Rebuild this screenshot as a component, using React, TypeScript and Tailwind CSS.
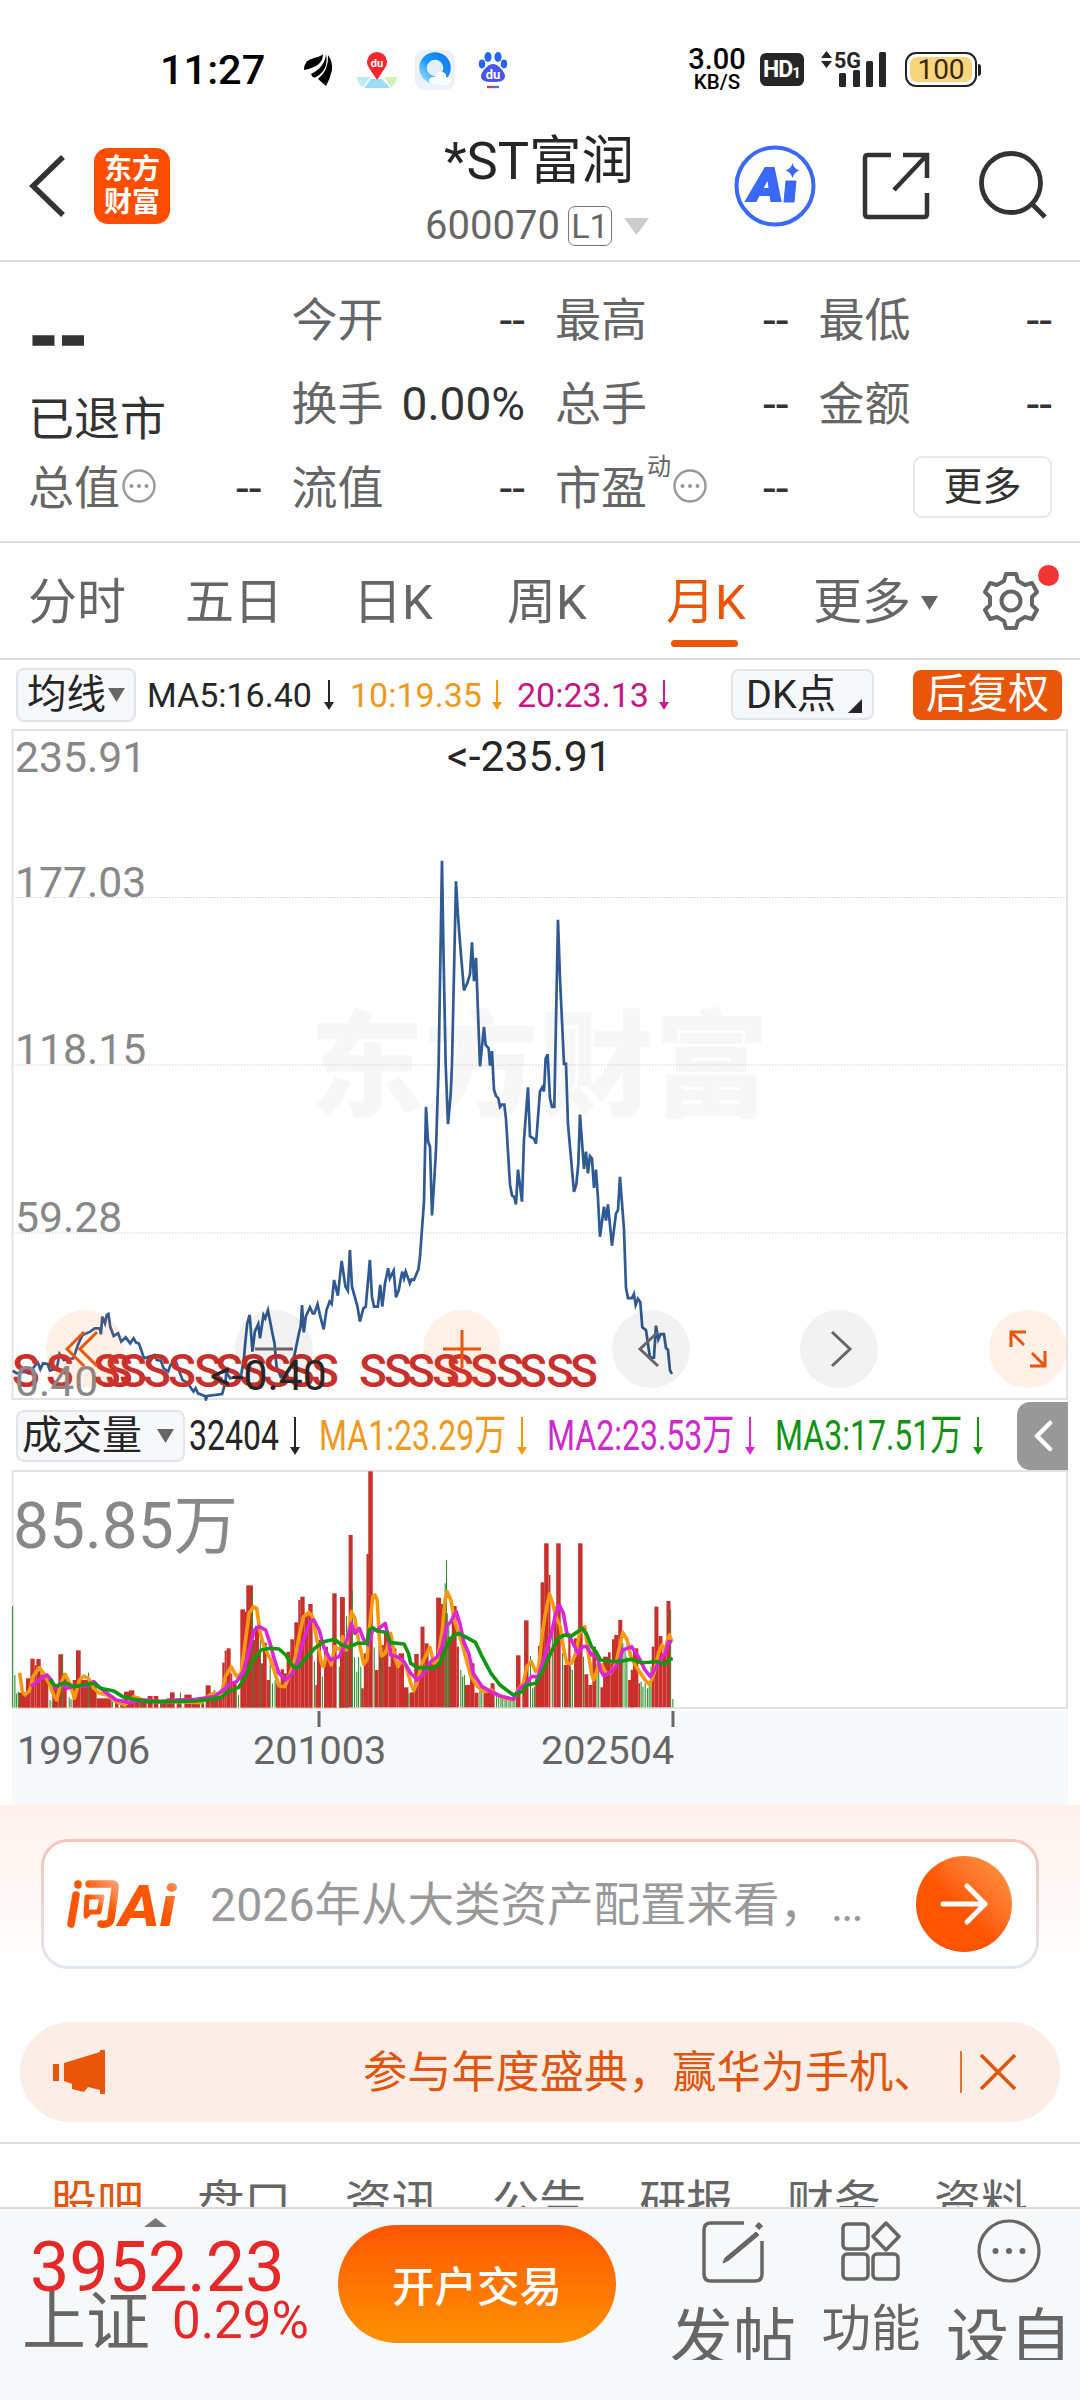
import type { ReactNode } from 'react';
import clsx from 'clsx';

type Point = [number, number];
type Bar = [number, number, number];

const STATS = [
  { label: '今开', value: '--' },
  { label: '最高', value: '--' },
  { label: '最低', value: '--' },
  { label: '换手', value: '0.00%' },
  { label: '总手', value: '--' },
  { label: '金额', value: '--' },
];

const PERIODS = [
  { label: '分时', width: 'w-[157px]' },
  { label: '五日', width: 'w-[168px]' },
  { label: '日K', width: 'w-[154px]' },
  { label: '周K', width: 'w-[159px]' },
  { label: '月K', width: 'w-[82px]' },
];

const INFO_TABS = ['股吧', '盘口', '资讯', '公告', '研报', '财务', '资料'];

const GRID_LINES = [897.5, 1065, 1233];
const PRICE_LABELS = [
  { text: '235.91', y: 772 },
  { text: '177.03', y: 897 },
  { text: '118.15', y: 1064 },
  { text: '59.28', y: 1232 },
  { text: '0.40', y: 1396 },
];

// x centres of the "S" (送转) event markers
const SPLIT_MARKS = [
  26, 60, 107, 119, 133, 157, 182, 208, 229, 253, 277, 301, 325,
  373, 398, 421, 446, 460, 484, 510, 533, 560, 584,
];

const EARLY_PRICE =
  '37,512 48,520 70,515 85,520 103,495 110,488 117,508 125,490 138,492 145,512 165,505 173,462 185,480 213,475 228,430 240,405 262,395 275,385 290,385 293,403 297,350 305,370 310,345 315,342 320,380 330,408 343,400 352,425 365,412 378,430 388,415 395,428 403,430 410,450 418,475 450,465 455,480 467,482 475,505 488,515 495,495 512,488 520,512 530,540 545,550 555,565 562,575 568,565 575,580 595,588 598,598 602,588 645,582 655,545 657,515 668,535 690,530 700,525 708,480 712,430 718,370 725,345 733,455 740,395 750,372 755,415 765,345 770,355 778,330 790,395 797,430 803,500 815,530 830,520 850,490 860,440 868,400 873,380 877,315 882,397 888,350 900,322 908,340 913,340 922,313 930,350 940,388 948,330 957,305 963,312 970,240 981,287 992,183 1003,260 1010,272 1016,150 1022,260 1038,320 1045,365 1055,325 1062,320 1074,180 1080,290 1086,320 1097,320 1104,255 1110,320 1118,250 1127,205 1132,235 1143,212 1150,292 1158,270 1164,235 1168,215 1173,235 1178,215 1190,250 1195,238 1202,240 1214,210';
const LATE_PRICE =
  '175,1250 180,1210 192,1050 198,775 204,875 210,890 216,1090 222,1000 228,900 236,650 246,60 250,300 257,650 264,825 272,740 276,650 288,120 294,220 301,310 312,437 322,415 330,390 336,297 342,410 348,342 360,657 372,543 377,595 386,605 390,655 396,613 402,725 408,743 415,750 420,775 426,768 433,768 438,810 450,1000 456,1032 463,1037 468,1058 474,957 486,1050 492,870 504,718 510,860 522,868 528,882 540,730 547,718 552,730 557,635 563,622 570,750 576,775 583,775 594,232 600,400 612,650 618,650 624,825 642,1022 649,1000 655,940 660,797 672,955 678,905 684,968 690,918 696,925 702,1010 708,957 714,1040 720,1152 732,1065 738,1105 744,1058 756,1178 768,1085 774,1075 780,978 792,1130 798,1300 804,1330 816,1330 822,1318 827,1350 834,1332 841,1342 847,1415 858,1423 870,1503 882,1503 888,1410 895,1450 902,1435 912,1435 918,1475 924,1480 930,1540 936,1550';

// [from, to, top], bars stand on y = 503
const EARLY_BARS: Bar[] = [
  [55, 78, 458], [78, 91, 415], [91, 104, 356], [104, 109, 375], [109, 122, 357], [122, 145, 403],
  [157, 175, 440], [175, 188, 343], [188, 200, 400], [218, 228, 420], [228, 242, 331], [242, 266, 420],
  [266, 290, 430], [290, 335, 475], [345, 356, 488], [362, 372, 485], [372, 387, 455], [387, 403, 451],
  [403, 418, 470], [418, 440, 478], [443, 458, 468], [461, 475, 468], [480, 500, 482], [500, 512, 475],
  [510, 524, 457], [530, 545, 475], [553, 575, 464], [575, 600, 476], [604, 612, 488], [617, 632, 436],
  [632, 655, 465], [655, 667, 455], [667, 674, 368], [674, 680, 332], [680, 692, 325], [692, 697, 400],
  [697, 710, 430], [721, 735, 208], [735, 740, 215], [739, 759, 136], [759, 765, 300], [765, 777, 258],
  [777, 783, 330], [783, 789, 370], [789, 800, 308], [800, 810, 420], [828, 842, 430], [842, 852, 388],
  [852, 860, 400], [860, 871, 335], [871, 883, 298], [883, 895, 247], [895, 901, 180], [901, 914, 170],
  [914, 925, 220], [925, 938, 192], [946, 951, 435], [951, 963, 300], [972, 984, 320], [984, 997, 360],
  [997, 1010, 160], [1018, 1022, 405], [1020, 1034, 172], [1036, 1046, 320],
];

// [from, to, top], bars stand on y = 922
const LATE_BARS: Bar[] = [
  [763, 772, 592], [772, 781, 730], [781, 790, 405], [809, 815, 865], [815, 822, 760], [821, 826, 462],
  [825, 835, 214], [840, 848, 810], [848, 860, 735], [860, 870, 700], [870, 879, 800], [875, 888, 745],
  [888, 893, 800], [893, 905, 760], [905, 915, 862], [918, 928, 877], [928, 938, 762], [938, 943, 800],
  [942, 951, 680], [951, 960, 730], [960, 977, 790], [977, 988, 593], [988, 996, 612], [996, 1003, 640],
  [1003, 1014, 710], [1012, 1023, 618], [1023, 1028, 740], [1041, 1053, 855], [1053, 1063, 790],
  [1063, 1072, 878], [1083, 1100, 875], [1099, 1108, 850], [1156, 1166, 766], [1170, 1175, 850],
  [1174, 1184, 661], [1199, 1207, 835], [1205, 1212, 738], [1211, 1219, 547], [1219, 1229, 430],
  [1229, 1233, 525], [1240, 1246, 620], [1246, 1256, 430], [1263, 1273, 795], [1273, 1278, 700],
  [1286, 1296, 715], [1295, 1305, 430], [1309, 1318, 823], [1318, 1327, 855], [1327, 1335, 740],
  [1345, 1352, 862], [1351, 1362, 770], [1362, 1368, 757], [1368, 1374, 790], [1371, 1378, 718],
  [1376, 1385, 705], [1385, 1394, 660], [1407, 1418, 840], [1413, 1419, 810], [1418, 1430, 745],
  [1430, 1434, 850], [1460, 1466, 740], [1466, 1475, 620], [1475, 1484, 708], [1484, 1493, 760],
  [1493, 1502, 603],
];

const DOWN_BARS: Point[] = [
  [28, 618], [33, 825], [37, 880], [41, 875], [112, 900], [117, 905], [140, 762], [155, 893], [159, 898],
  [198, 818], [252, 905], [270, 908], [318, 912], [360, 908], [404, 877], [455, 905], [480, 870],
  [528, 870], [534, 885], [565, 575], [583, 700], [605, 770], [610, 850], [616, 840], [704, 785],
  [722, 830], [760, 800], [776, 648], [789, 570], [794, 772], [799, 815], [803, 772], [808, 800],
  [838, 742], [855, 735], [916, 880], [997, 550], [1000, 480], [1005, 680], [1032, 810], [1036, 830],
  [1040, 825], [1075, 870], [1079, 868], [1112, 880], [1117, 885], [1122, 888], [1126, 892], [1131, 897],
  [1135, 900], [1140, 900], [1144, 903], [1149, 900], [1153, 880], [1188, 768], [1193, 865], [1197, 860],
  [1237, 700], [1260, 760], [1278, 800], [1282, 810], [1307, 770], [1337, 790], [1341, 800], [1395, 730],
  [1400, 750], [1404, 770], [1436, 845], [1440, 860], [1445, 850], [1450, 865], [1454, 860], [1458, 800],
  [1502, 630], [1507, 897],
];

const MA_LINES = [
  {
    color: '#f7990f',
    points:
      '44,818 50,875 56,885 66,872 74,830 88,803 98,820 110,850 120,885 127,900 136,850 146,823 156,850 167,895 178,840 188,828 198,835 210,865 222,880 240,885 260,905 280,915 300,890 320,900 350,905 400,905 450,908 470,885 480,880 495,885 505,830 518,800 530,830 540,820 550,720 558,640 568,620 575,625 583,700 593,745 605,775 615,815 625,858 638,860 650,820 660,780 670,710 680,650 692,637 700,650 710,720 720,790 725,800 732,760 742,795 750,740 762,750 767,710 776,750 787,635 795,655 800,700 808,750 815,793 822,780 828,680 835,590 840,585 845,600 850,720 855,768 863,760 868,740 875,700 885,775 892,800 900,780 910,800 920,850 927,872 935,845 945,790 955,765 963,742 972,790 980,780 990,700 997,600 1002,575 1010,600 1018,660 1025,690 1035,730 1045,780 1055,830 1070,860 1085,875 1100,870 1115,885 1130,895 1150,900 1160,870 1172,850 1180,800 1190,785 1200,815 1207,800 1215,700 1222,640 1231,582 1238,610 1246,650 1255,680 1263,750 1270,790 1280,790 1290,760 1298,700 1310,680 1318,760 1325,820 1330,840 1340,800 1348,795 1358,820 1368,820 1380,790 1388,740 1395,697 1405,720 1413,770 1425,800 1435,820 1445,840 1455,855 1465,820 1475,760 1483,735 1490,755 1495,720 1500,705 1505,725',
  },
  {
    color: '#d926d9',
    points:
      '68,858 78,852 90,838 105,825 115,840 125,865 135,850 150,865 170,858 190,860 210,845 225,865 245,885 260,900 280,905 290,908 320,900 360,905 400,900 440,898 480,890 500,870 515,852 530,845 545,815 560,740 570,690 580,680 595,690 605,730 615,780 625,820 640,840 655,820 668,780 680,720 695,665 703,660 715,690 725,740 740,780 750,775 760,770 770,740 780,710 787,670 795,700 805,685 815,720 825,735 835,690 845,690 863,670 870,710 875,765 890,770 905,785 920,820 935,840 950,820 965,785 980,770 990,740 1000,680 1010,665 1022,635 1030,670 1040,730 1050,760 1060,820 1080,860 1100,875 1120,888 1150,898 1165,865 1180,850 1190,830 1205,830 1220,770 1235,700 1245,640 1253,615 1262,640 1270,700 1280,720 1295,760 1305,740 1315,740 1325,765 1338,770 1345,810 1353,828 1370,815 1385,790 1395,750 1415,740 1430,770 1445,810 1457,830 1475,790 1490,760 1498,725 1506,725',
  },
  {
    color: '#0f980f',
    points:
      '112,838 120,855 128,858 145,848 165,860 185,855 210,850 225,865 255,873 275,890 300,898 330,905 380,905 440,903 495,893 510,875 535,862 550,830 565,785 585,750 605,745 625,747 640,765 658,803 670,800 685,775 705,745 725,725 750,718 765,735 780,742 800,730 822,730 827,690 835,683 845,693 865,697 875,728 905,732 915,760 920,790 935,803 975,803 985,790 1000,740 1015,708 1027,700 1045,712 1065,727 1080,770 1100,820 1120,855 1150,885 1170,875 1180,855 1200,850 1215,815 1230,770 1250,715 1265,705 1280,708 1305,685 1315,705 1325,740 1335,755 1345,780 1365,783 1385,785 1415,778 1435,788 1455,787 1470,785 1490,793 1500,778 1507,776',
  },
];

function DownArrow({ color }: { color: string }) {
  return (
    <svg width="10" height="38" viewBox="0 0 10 38" className="shrink-0">
      <path d="M5 0V32" stroke={color} strokeWidth="2" />
      <path d="M0 30H10L5 38Z" fill={color} />
    </svg>
  );
}

function Triangle({ className }: { className?: string }) {
  return (
    <svg viewBox="0 0 16 14" preserveAspectRatio="none" className={clsx('shrink-0', className)}>
      <path d="M0 0H16L8 14Z" />
    </svg>
  );
}

function MoreDots() {
  return (
    <svg width="36" height="36" viewBox="0 0 36 36" className="-mt-[5px] ml-[1px] shrink-0">
      <circle cx="18" cy="18" r="15.5" fill="none" stroke="#999" strokeWidth="2.4" />
      <circle cx="10.5" cy="18" r="2" fill="#999" />
      <circle cx="18" cy="18" r="2" fill="#999" />
      <circle cx="25.5" cy="18" r="2" fill="#999" />
    </svg>
  );
}

function StatusBar() {
  return (
    <div className="flex h-[137px] items-center pt-[2px] text-black">
      <div className="ml-[160px] w-[143px] text-[41.5px] font-medium leading-none">11:27</div>
      <div className="flex items-center">
        <svg width="32" height="36" viewBox="0 0 32 36">
          <path d="M2 16Q2 8 11 6Q16 5 19 3Q17 11 2 16Z" />
          <path d="M1 18Q1 8 10 7Q17 6 20 2Q20 10 13 14Q7 17 1 18Z" />
          <path d="M8 22Q22 15 23 2Q26 18 13 25Q10 27 8 22Z" />
          <path d="M15 27Q26 18 25 3Q30 10 29 18Q27 27 23 34Z" />
        </svg>
        <svg width="42" height="38" viewBox="0 0 42 38" className="ml-[21px]">
          <path d="M1 26H14L7 36Q1 33 1 26Z" fill="#bfeafa" />
          <path d="M15 28H26L34 37H8Z" fill="#9bdcf7" />
          <path d="M28 26H41Q40 34 35 36Z" fill="#d3f2bb" />
          <path d="M21 29L13 17A10 10 0 1 1 29 17Z" fill="#f22a30" />
          <text x="21" y="16" fontSize="11" fontWeight="700" fill="#fff" textAnchor="middle">du</text>
        </svg>
        <svg width="42" height="42" viewBox="0 0 42 42" className="ml-[16px]">
          <defs>
            <linearGradient id="browser" x1="0" y1="1" x2="1" y2="0">
              <stop offset="0" stopColor="#8fd8fb" />
              <stop offset=".45" stopColor="#1b9cf9" />
              <stop offset="1" stopColor="#1478f3" />
            </linearGradient>
          </defs>
          <rect x="1" y="1" width="40" height="40" rx="9" fill="#edf1f8" />
          <circle cx="21" cy="19" r="12" fill="#e4eefa" stroke="url(#browser)" strokeWidth="7.5" />
          <path d="M22 36Q14 35 15 31Q17 27 21 28Q23 21 29 23Q33 25 32 28Q38 29 37 33Q35 36 32 36Z" fill="#f8fbff" />
        </svg>
        <svg width="30" height="40" viewBox="0 0 30 40" className="ml-[22px]">
          <ellipse cx="10" cy="7" rx="3.6" ry="5" fill="#2468f2" />
          <ellipse cx="20" cy="7" rx="3.6" ry="5" fill="#2468f2" />
          <ellipse cx="4" cy="14" rx="3.2" ry="4.4" fill="#2468f2" />
          <ellipse cx="26" cy="14" rx="3.2" ry="4.4" fill="#2468f2" />
          <path d="M15 14C20 14 27 22 27 26C27 31 22 32 15 32S3 31 3 26C3 22 10 14 15 14Z" fill="#4a55ee" />
          <text x="15" y="29" fontSize="13" fontWeight="700" fill="#fff" textAnchor="middle">du</text>
          <path d="M9 37H15" stroke="#c44" strokeWidth="2.4" />
          <path d="M15 37H21" stroke="#47c" strokeWidth="2.4" />
        </svg>
      </div>
      <div className="ml-[178px] flex w-[62px] flex-col items-center">
        <span className="text-[29px] font-medium leading-[25px]">3.00</span>
        <span className="text-[20.5px] font-medium leading-[20px]">KB/S</span>
      </div>
      <div className="ml-[12px] flex h-[33px] w-[44px] items-center justify-center rounded-[6px] bg-[#262626] text-white">
        <span className="text-[23px] font-bold leading-none tracking-[-1px]">HD</span>
        <span className="mt-[7px] text-[15px] font-bold leading-none">1</span>
      </div>
      <svg width="70" height="40" viewBox="0 0 70 40" className="-mt-[1px] ml-[15px]" fill="#262626">
        <path d="M2 9L7.500 2L13 9ZM2 12L7.500 19L13 12Z" />
        <text x="15" y="19" fontSize="22" fontWeight="700" textLength="27" lengthAdjust="spacingAndGlyphs">5G</text>
        <rect x="20" y="24" width="7" height="14" rx="1.500" />
        <rect x="34" y="21" width="7" height="17" rx="1.500" />
        <rect x="47" y="12" width="7" height="26" rx="1.500" />
        <rect x="60" y="3" width="7" height="35" rx="1.500" />
      </svg>
      <div className="ml-[16px] flex h-[35px] w-[72px] items-center justify-center rounded-[11px] border-[2.5px] border-[#222] p-[3px]">
        <div className="flex h-full w-full items-center justify-center rounded-[7px] bg-[#fbd57c] text-[28px] leading-none text-[#332a10]">
          100
        </div>
      </div>
      <div className="ml-[1px] h-[12px] w-[3px] rounded-r-full bg-[#222]" />
    </div>
  );
}

function Header() {
  return (
    <div className="flex h-[125px] items-start border-b-2 border-[#dcdcdc]">
      <svg width="38" height="64" viewBox="0 0 38 64" className="ml-[29px] mt-[17px]">
        <path d="M34 3L4 32L34 61" fill="none" stroke="#333" strokeWidth="5.500" />
      </svg>
      <div className="ml-[27px] mt-[11px] flex h-[76px] w-[76px] flex-col items-center justify-center rounded-[14px] bg-[#ff4d00] text-[28px] font-bold leading-[33px] text-white">
        <span>东方</span>
        <span>财富</span>
      </div>
      <div className="-mt-[11px] ml-[237px] w-[265px]">
        <div className="ml-[37px] text-[52.5px] leading-[70px] text-[#262626]">*ST富润</div>
        <div className="ml-[18px] flex h-[60px] items-center text-[40px] leading-none text-[#666]">
          600070
          <span className="ml-[8px] flex h-[40px] w-[44px] items-center justify-center rounded-[7px] border-[1.5px] border-[#777] text-[34px]">
            L1
          </span>
          <Triangle className="ml-[12px] h-[17px] w-[25px] fill-[#ccc]" />
        </div>
      </div>
      <svg width="82" height="82" viewBox="0 0 82 82" className="ml-[62px] mt-[8px]">
        <circle cx="41" cy="41" r="38.500" fill="none" stroke="#3a68f9" strokeWidth="4" />
        <text x="15" y="56" fontSize="46" fontWeight="900" fontStyle="italic" fill="#3a68f9" stroke="#3a68f9" strokeWidth="2" textLength="34" lengthAdjust="spacingAndGlyphs">A</text>
        <path d="M52 36H62L60 57H50Z" fill="#3a68f9" stroke="#3a68f9" strokeLinejoin="round" />
        <path d="M58.500 18Q60 24 65.500 25.500Q60 27 58.500 33Q57 27 51.500 25.500Q57 24 58.500 18Z" fill="#3a68f9" />
      </svg>
      <svg width="68" height="68" viewBox="0 0 68 68" className="ml-[46px] mt-[15px]" fill="none" stroke="#333" strokeWidth="4.500">
        <path d="M29 3H6Q3 3 3 6V62Q3 65 6 65H62Q65 65 65 62V41" />
        <path d="M41 3H65V26M64 4L32 38" />
      </svg>
      <svg width="72" height="72" viewBox="0 0 72 72" className="ml-[48px] mt-[13px]" fill="none" stroke="#333" strokeWidth="4.800">
        <circle cx="33" cy="33" r="29.500" />
        <path d="M54 54L67 67" />
      </svg>
    </div>
  );
}

function Stat({ label, value, children }: { label: string; value: string; children?: ReactNode }) {
  return (
    <div className="flex h-[84px] items-center justify-between">
      <span className="flex items-center text-[#666]">
        {label}
        {children}
      </span>
      <span className="text-[#333]">{value}</span>
    </div>
  );
}

function Quote() {
  return (
    <div className="h-[281px] border-b-2 border-[#dcdcdc] pl-[28px] pr-[28px] pt-[16px] text-[46px] leading-none">
      <div className="grid grid-cols-4 gap-x-[30px]">
        <div className="row-span-2 flex flex-col text-[#333]">
          <span className="mt-[30px] text-[70px] font-black leading-[60px] tracking-[-2px] [-webkit-text-stroke:1.5px_#333]">
            --
          </span>
          <span className="mt-[28px]">已退市</span>
        </div>
        {STATS.map((stat) => (
          <Stat key={stat.label} {...stat} />
        ))}
        <Stat label="总值" value="--">
          <MoreDots />
        </Stat>
        <Stat label="流值" value="--" />
        <Stat label="市盈" value="--">
          <sup className="-mt-[18px] text-[24px] leading-none">动</sup>
          <MoreDots />
        </Stat>
        <div className="flex items-center justify-end">
          <div className="-mt-[2px] flex h-[62px] w-[139px] items-center justify-center rounded-[9px] border-2 border-[#e8e8e8] text-[39px] text-[#333]">
            更多
          </div>
        </div>
      </div>
    </div>
  );
}

function PeriodTabs() {
  return (
    <div className="flex h-[117px] items-center border-b-2 border-[#dcdcdc] pl-[28px] pt-[4px] text-[49px] leading-none text-[#666]">
      <div className="flex w-[721px]">
        {PERIODS.map(({ label, width }) => (
          <div
            key={label}
            className={clsx('relative whitespace-nowrap', width, label === '月K' && 'text-[#e9560a]')}
          >
            {label}
            {label === '月K' && (
              <span className="absolute -bottom-[20px] left-[5px] h-[7px] w-[67px] rounded-full bg-[#e9560a]" />
            )}
          </div>
        ))}
      </div>
      <span className="ml-[64px]">更多</span>
      <Triangle className="ml-[10px] h-[14px] w-[17px] fill-[#666]" />
      <div className="relative -mt-[4px] ml-[43px]">
        <svg width="60" height="60" viewBox="0 0 60 60" fill="none" stroke="#666" strokeWidth="4" strokeLinejoin="round">
          <path d="M25 3H35L37 10L44 14L51 12L56 21L51 26V34L56 39L51 48L44 46L37 50L35 57H25L23 50L16 46L9 48L4 39L9 34V26L4 21L9 12L16 14L23 10Z" />
          <circle cx="30" cy="30" r="9.500" />
        </svg>
        <span className="absolute -right-[18px] -top-[6px] h-[21px] w-[21px] rounded-full bg-[#f43531]" />
      </div>
    </div>
  );
}

function IndicatorRow() {
  return (
    <div className="flex h-[69px] items-center pl-[16px] leading-none text-[#262626]">
      <div className="flex h-[54px] w-[120px] items-center rounded-[8px] border-2 border-[#e3e5e8] bg-[#f7f8fa] pl-[9px] text-[39.5px]">
        均线
        <Triangle className="ml-[2px] h-[14px] w-[17px] fill-[#666]" />
      </div>
      <div className="flex items-center pl-[11px] text-[34px]">
        <span className="w-[177px]">MA5:16.40</span>
        <DownArrowSmall color="#262626" />
        <span className="ml-[16px] w-[142px] text-[#f0991b]">10:19.35</span>
        <DownArrowSmall color="#f7990f" />
        <span className="ml-[15px] w-[142px] text-[#c71585]">20:23.13</span>
        <DownArrowSmall color="#d01890" />
      </div>
      <div className="ml-[62px] flex h-[51px] w-[143px] items-center rounded-[8px] border-2 border-[#e3e5e8] bg-[#f7f8fa] pl-[13px] text-[39.5px]">
        <span className="whitespace-nowrap">DK点</span>
        <svg width="14" height="14" viewBox="0 0 14 14" className="ml-[12px] mt-[22px] shrink-0">
          <path d="M14 0V14H0Z" fill="#262626" />
        </svg>
      </div>
      <div className="ml-[39px] flex h-[50px] w-[149px] items-center justify-center rounded-[8px] bg-[#e9560a] text-[41px] text-white">
        后复权
      </div>
    </div>
  );
}

function DownArrowSmall({ color }: { color: string }) {
  return (
    <svg width="10" height="30" viewBox="0 0 10 30" className="shrink-0">
      <path d="M5 0V25" stroke={color} strokeWidth="2" />
      <path d="M0 22H10L5 30Z" fill={color} />
    </svg>
  );
}

function ChartButton({ accent, children }: { accent?: boolean; children: ReactNode }) {
  return (
    <div
      className={clsx(
        'flex h-[78px] w-[78px] items-center justify-center rounded-full',
        accent ? 'bg-[#ff5a00]/9' : 'bg-black/5',
      )}
    >
      <svg
        width="40"
        height="40"
        viewBox="0 0 40 40"
        fill="none"
        strokeWidth="3"
        stroke={accent ? '#e9560a' : '#666'}
      >
        {children}
      </svg>
    </div>
  );
}

function PriceChart() {
  return (
    <div className="relative h-[672px]">
      <svg width="1080" height="672" viewBox="0 729 1080 672" className="block">
        <text x="539" y="1107" fontSize="115" fontWeight="900" fill="#f7f7f7" textAnchor="middle">东方财富</text>
        <rect x="12.500" y="730" width="1054.500" height="669" fill="none" stroke="#e3e3e3" strokeWidth="2" />
        {GRID_LINES.map((y) => (
          <path key={y} d={`M13 ${y}H1067`} stroke="#d0d0d0" strokeDasharray="1.500 1.500" />
        ))}
        <g fill="none" stroke="#2f5a93" strokeWidth="2.700">
          <polyline points={EARLY_PRICE} transform="translate(0 1200) scale(.3444 .3333)" vectorEffect="non-scaling-stroke" />
          <polyline points={LATE_PRICE} transform="translate(360 840) scale(.3333 .3444)" vectorEffect="non-scaling-stroke" />
        </g>
        <g fontSize="46" fontWeight="500" fill="#c9302c" textAnchor="middle">
          {SPLIT_MARKS.map((x) => (
            <text key={x} x={x} y="1387">S</text>
          ))}
        </g>
        <g fontSize="42.700" fill="#888">
          {PRICE_LABELS.map(({ text, y }) => (
            <text key={text} x="15" y={y}>{text}</text>
          ))}
        </g>
        <g fontSize="42.700" fill="#262626">
          <text x="447" y="771">&lt;-235.91</text>
          <text x="210" y="1390">&lt;-0.40</text>
        </g>
      </svg>
      <div className="absolute left-[46px] right-[13px] top-[581px] flex justify-between">
        <ChartButton accent>
          <path d="M19 3L2 20L19 37M32 3L15 20L32 37" />
        </ChartButton>
        <ChartButton>
          <path d="M1 20H39" />
        </ChartButton>
        <ChartButton accent>
          <path d="M1 20H39M20 1V39" />
        </ChartButton>
        <ChartButton>
          <path d="M27 3L9 20L27 37" />
        </ChartButton>
        <ChartButton>
          <path d="M13 3L31 20L13 37" />
        </ChartButton>
        <ChartButton accent>
          <path d="M3 18V3H18M3 3L16 16M37 22V37H22M37 37L24 24" />
        </ChartButton>
      </div>
    </div>
  );
}

function VolumeLegend({ text, className, color }: { text: string; className: string; color: string }) {
  return (
    <div className={clsx('flex items-center', className)}>
      <span className="w-[198px] origin-left scale-x-[.745] whitespace-nowrap text-[43px]">{text}</span>
      <DownArrow color={color} />
    </div>
  );
}

function VolumeRow() {
  return (
    <div className="flex h-[69px] items-center pl-[16px] leading-none text-[#262626]">
      <div className="flex h-[52px] w-[169px] items-center rounded-[8px] border-2 border-[#e3e5e8] bg-[#f7f8fa] pl-[4px] text-[40px]">
        成交量
        <Triangle className="ml-[15px] h-[14px] w-[17px] fill-[#666]" />
      </div>
      <div className="ml-[4px] flex items-center">
        <span className="w-[101px] origin-left scale-x-[.745] text-[43px]">32404</span>
        <DownArrow color="#262626" />
      </div>
      <VolumeLegend text="MA1:23.29万" color="#f7990f" className="ml-[19px] w-[228px] text-[#f0991b]" />
      <VolumeLegend text="MA2:23.53万" color="#d926d9" className="w-[228px] text-[#cf28cf]" />
      <VolumeLegend text="MA3:17.51万" color="#0f980f" className="w-[228px] text-[#109310]" />
      <div className="ml-auto mr-[12px] flex h-[68px] w-[51px] items-center justify-center rounded-l-[13px] bg-[#999]">
        <svg width="20" height="32" viewBox="0 0 20 32" className="fill-none stroke-white">
          <path d="M17 3L4 16L17 29" strokeWidth="4.500" strokeLinecap="round" strokeLinejoin="round" />
        </svg>
      </div>
    </div>
  );
}

function VolumeChart() {
  return (
    <svg width="1080" height="335" viewBox="0 1470 1080 335" className="block">
      <rect x="12.500" y="1471" width="1054.500" height="237" fill="none" stroke="#e3e3e3" strokeWidth="2" />
      <rect x="12" y="1711" width="1056" height="94" fill="#f7f8fa" />
      <text x="13" y="1547.500" fontSize="64" fill="#888">85.85万</text>
      <g transform="translate(0 1540) scale(.3333)" fill="#c9302c">
        {EARLY_BARS.map(([from, to, top]) => (
          <rect key={from} x={from} y={top} width={to - from} height={503 - top} />
        ))}
      </g>
      <g transform="translate(0 1400) scale(.4464 .3333)">
        {LATE_BARS.map(([from, to, top]) => (
          <rect key={from} x={from} y={top} width={to - from} height={922 - top} fill="#c9302c" />
        ))}
        {DOWN_BARS.map(([x, top]) => (
          <rect key={x} x={x - 1} y={top} width="2.500" height={922 - top} fill="#2f922f" />
        ))}
        {MA_LINES.map(({ color, points }) => (
          <polyline
            key={color}
            points={points}
            fill="none"
            stroke={color}
            strokeWidth="3.600"
            strokeLinejoin="round"
            vectorEffect="non-scaling-stroke"
          />
        ))}
      </g>
      <path d="M319 1711V1727M673 1711V1727" stroke="#666" strokeWidth="3" />
      <g fontSize="39.500" fill="#666">
        <text x="17" y="1764">199706</text>
        <text x="253" y="1764">201003</text>
        <text x="541" y="1764">202504</text>
      </g>
    </svg>
  );
}

function AskAi() {
  return (
    <div className="h-[217px] bg-linear-to-b from-[#fff1ec] to-white to-80% px-[41px] pt-[34px]">
      <div className="rounded-[27px] bg-linear-to-b from-[#f5c5bc] to-[#dfe7f2] p-[3px]">
        <div className="flex h-[124px] items-center rounded-[24px] bg-white pl-[22px] leading-none">
          <svg width="112" height="52" viewBox="0 0 112 52">
            <defs>
              <linearGradient id="ask" x1="0" y1="1" x2="1" y2="0">
                <stop offset=".6" stopColor="#ff5500" />
                <stop offset="1" stopColor="#ff9a6b" />
              </linearGradient>
            </defs>
            <g fill="none" stroke="url(#ask)" strokeWidth="7.500" strokeLinejoin="round" strokeLinecap="round">
              <path d="M10 17L5 46M12 6V7M23 6H46Q50 6 49 11L45 41Q44 47 35 46" />
              <path d="M21 19H36L33 34H24L20 38Z" strokeWidth="5" />
            </g>
            <text x="53" y="48" fontSize="57" fontWeight="800" fontStyle="italic" fill="url(#ask)" textLength="57" lengthAdjust="spacingAndGlyphs">Ai</text>
          </svg>
          <span className="ml-[32px] w-[655px] whitespace-nowrap pt-[2px] text-[46.5px] text-[#999]">
            2026年从大类资产配置来看，<span className="ml-[5px] tracking-[-2px]">...</span>
          </span>
          <div className="ml-[51px] flex h-[96px] w-[96px] items-center justify-center rounded-full bg-linear-to-tr from-[#ff5500] from-45% to-[#ff9a45]">
            <svg width="50" height="44" viewBox="0 0 50 44" fill="none" stroke="#fff" strokeWidth="5" strokeLinecap="round" strokeLinejoin="round">
              <path d="M4 22H46M28 4L46 22L28 40" />
            </svg>
          </div>
        </div>
      </div>
    </div>
  );
}

function Banner() {
  return (
    <div className="mx-[20px] flex h-[100px] items-center rounded-[50px] bg-[#fceee6] pl-[33px] leading-none">
      <svg width="53" height="46" viewBox="0 0 53 46" fill="#e9560a">
        <rect x="0" y="15" width="6" height="17" />
        <path d="M11 14L47 3V1H52V45H47V41L35 38L31 43L19 40V35L11 32Z" />
      </svg>
      <span className="ml-[257px] w-[560px] whitespace-nowrap pt-[3px] text-[44.2px] text-[#e0560f]">
        参与年度盛典，赢华为手机、
      </span>
      <div className="ml-[37px] h-[42px] w-[1.5px] bg-[#e0762f]" />
      <svg width="38" height="38" viewBox="0 0 38 38" className="ml-[17px]">
        <path d="M2 2L36 36M36 2L2 36" stroke="#e0560f" strokeWidth="3.500" />
      </svg>
    </div>
  );
}

function BottomBar() {
  return (
    <div className="flex h-[193px] items-start border-t-2 border-[#dcdcdc] bg-[#f7f8fa] leading-none text-[#666]">
      <div className="w-[338px] pl-[22px] pt-[9px]">
        <Triangle className="ml-[122px] h-[9px] w-[23px] rotate-180 fill-[#777]" />
        <div className="ml-[8px] mt-[8px] h-[57px] text-[70px] leading-[65px] text-[#e62828]">3952.23</div>
        <div className="flex h-[62px] items-center whitespace-nowrap text-[64px]">
          上证<span className="-mt-[6px] ml-[22px] text-[51px] text-[#e62828]">0.29%</span>
        </div>
      </div>
      <div className="mt-[16px] flex h-[118px] w-[278px] items-center justify-center rounded-full bg-linear-to-b from-[#ff5500] to-[#ff9000] text-[42.5px] font-medium text-white">
        <span className="mt-[9px]">开户交易</span>
      </div>
      <div className="ml-[53px] flex h-[151px] w-[128px] flex-col items-center overflow-hidden">
        <svg width="64" height="64" viewBox="0 0 64 64" className="mt-[11px] shrink-0" fill="none" stroke="#666" strokeWidth="3.500">
          <path d="M43 3H10Q3 3 3 10V54Q3 61 10 61H54Q61 61 61 54V21" />
          <path d="M24 38L55 12L58 15L28 40L22 43Z" fill="#666" strokeWidth="1" />
          <path d="M56 8L60 4" strokeWidth="6" />
        </svg>
        <span className="mt-[24px] text-[63px] leading-[61px]">发帖</span>
      </div>
      <div className="ml-[24px] flex w-[100px] flex-col items-center">
        <svg width="60" height="62" viewBox="0 0 60 62" className="mt-[11px]" fill="none" stroke="#666" strokeWidth="3.500">
          <rect x="2" y="4" width="25" height="25" rx="4" />
          <rect x="2" y="34" width="25" height="25" rx="4" />
          <rect x="32" y="34" width="25" height="25" rx="4" />
          <path d="M45 3L58 16.500L45 30L32 16.500Z" strokeLinejoin="round" />
        </svg>
        <span className="mt-[23px] text-[49.5px]">功能</span>
      </div>
      <div className="ml-[24px] flex h-[151px] w-[128px] flex-col items-center overflow-hidden">
        <svg width="66" height="66" viewBox="0 0 66 66" className="mt-[9px] shrink-0">
          <circle cx="33" cy="33" r="30" fill="none" stroke="#666" strokeWidth="3.200" />
          <circle cx="19.500" cy="33" r="3" fill="#666" />
          <circle cx="33" cy="33" r="3" fill="#666" />
          <circle cx="46.500" cy="33" r="3" fill="#666" />
        </svg>
        <span className="mt-[24px] text-[63px] leading-[61px]">设自</span>
      </div>
    </div>
  );
}

export default function App() {
  return (
    <div className="h-[2400px] w-[1080px] overflow-hidden bg-white font-[Roboto,'Noto_Sans_CJK_SC',sans-serif]">
      <StatusBar />
      <Header />
      <Quote />
      <PeriodTabs />
      <IndicatorRow />
      <PriceChart />
      <VolumeRow />
      <VolumeChart />
      <AskAi />
      <Banner />
      <div className="mt-[20px] flex h-[65px] justify-between overflow-hidden border-t-2 border-[#dcdcdc] pl-[50px] pr-[52px] pt-[35px] text-[47px] leading-none text-[#666]">
        {INFO_TABS.map((tab, i) => (
          <span key={tab} className={clsx(i === 0 && 'text-[#e0560f]')}>
            {tab}
          </span>
        ))}
      </div>
      <BottomBar />
    </div>
  );
}
